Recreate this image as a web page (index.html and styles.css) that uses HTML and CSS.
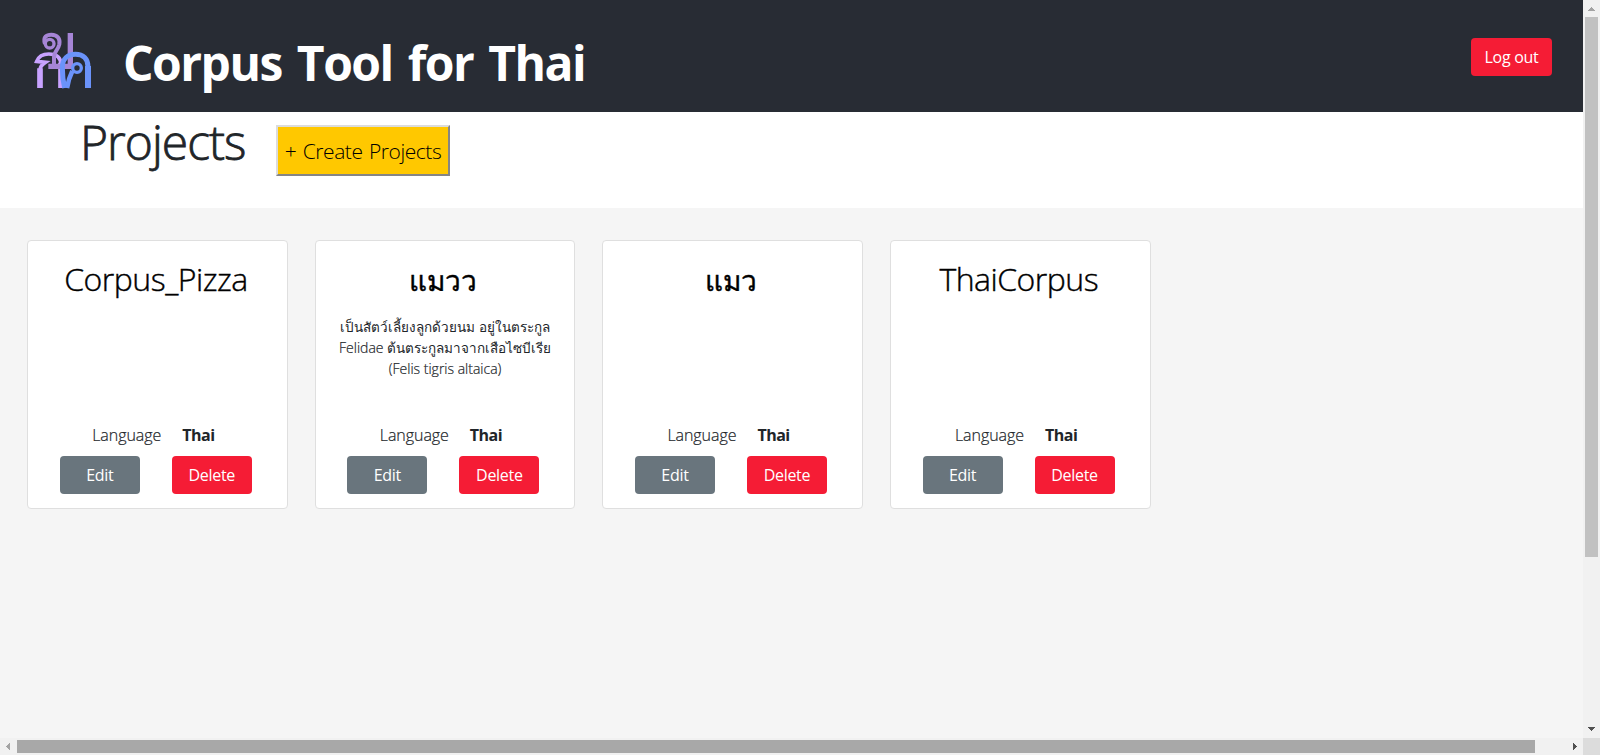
FILE: index.html
```html
<!DOCTYPE html>
<html lang="en">
<head>
<meta charset="utf-8">
<title>Corpus Tool for Thai</title>
<link rel="stylesheet" href="styles.css">
</head>
<body>
<div class="window">
  <div class="page">
    <header class="header">
      <svg class="logo" viewBox="0 0 270 240" fill="none">
        <path d="M60 204V150C60 139 65 134 76 127L50 124C57 107 70 102 86 102C110 102 123 112 123 135" stroke="#c8a2ff" stroke-width="11"/>
        <path d="M60 204V145M123 204V128" stroke="#c8a2ff" stroke-width="17"/>
        <path d="M75 72C68 50 80 44 94 44C113 44 121 57 118 73C114 91 102 95 102 110V132" stroke="#a685d6" stroke-width="12"/>
        <path d="M85 139H151V39" stroke="#a685d6" stroke-width="16"/>
        <circle cx="89" cy="71" r="13" stroke="#a685d6" stroke-width="10"/>
        <path d="M134 204C128 180 127 160 127 143C127 115 144 103 166 103C190 103 204 117 204 140V204" stroke="#6b93fa" stroke-width="15"/>
        <path d="M204 204V138" stroke="#6b93fa" stroke-width="18"/>
        <path d="M141 204C145 180 150 167 157 153" stroke="#6b93fa" stroke-width="14"/>
        <circle cx="171" cy="144" r="13" stroke="#6b93fa" stroke-width="10"/>
      </svg>
      <h1 class="title">Corpus Tool for Thai</h1>
      <button class="btn btn-red logout">Log out</button>
    </header>
    <section class="toolbar">
      <h2 class="heading">Projects</h2>
      <button class="create">+ Create Projects</button>
    </section>
    <main class="cards">
      <article class="card">
        <h3 class="name">Corpus_Pizza</h3>
        <p class="desc"></p>
        <p class="lang"><span class="lang-label">Language</span><b class="lang-value">Thai</b></p>
        <div class="actions"><button class="btn btn-gray">Edit</button><button class="btn btn-red">Delete</button></div>
      </article>
      <article class="card">
        <h3 class="name thai">แมวว</h3>
        <p class="desc"><span class="script">เป็นสัตว์เลี้ยงลูกด้วยนม อยู่ในตระกูล</span><br>Felidae <span class="script">ต้นตระกูลมาจากเสือไซบีเรีย</span><br>(Felis tigris altaica)</p>
        <p class="lang"><span class="lang-label">Language</span><b class="lang-value">Thai</b></p>
        <div class="actions"><button class="btn btn-gray">Edit</button><button class="btn btn-red">Delete</button></div>
      </article>
      <article class="card">
        <h3 class="name thai">แมว</h3>
        <p class="desc"></p>
        <p class="lang"><span class="lang-label">Language</span><b class="lang-value">Thai</b></p>
        <div class="actions"><button class="btn btn-gray">Edit</button><button class="btn btn-red">Delete</button></div>
      </article>
      <article class="card">
        <h3 class="name">ThaiCorpus</h3>
        <p class="desc"></p>
        <p class="lang"><span class="lang-label">Language</span><b class="lang-value">Thai</b></p>
        <div class="actions"><button class="btn btn-gray">Edit</button><button class="btn btn-red">Delete</button></div>
      </article>
    </main>
  </div>
  <div class="vbar">
    <svg class="arrow" viewBox="0 0 17 17" shape-rendering="crispEdges"><path d="M5 11L8.5 7L12 11Z" fill="#a3a3a3"/></svg>
    <div class="vthumb"></div>
    <svg class="arrow" viewBox="0 0 17 17" shape-rendering="crispEdges"><path d="M5 6L8.5 10L12 6Z" fill="#505050"/></svg>
  </div>
  <div class="hbar">
    <svg class="arrow" viewBox="0 0 17 17" shape-rendering="crispEdges"><path d="M10 5L6 8.5L10 12Z" fill="#a3a3a3"/></svg>
    <div class="hthumb"></div>
    <svg class="arrow" viewBox="0 0 17 17" shape-rendering="crispEdges"><path d="M7 5L11 8.5L7 12Z" fill="#505050"/></svg>
  </div>
  <div class="corner"></div>
</div>
</body>
</html>
```
FILE: styles.css
```css
* { box-sizing: border-box; }
body { margin: 0; overflow: hidden; font-family: "Open Sans", "Noto Sans", sans-serif; font-size: 16px; line-height: 24px; color: #212529; }
h1, h2, h3, p { margin: 0; font-weight: 300; }
button { font-family: inherit; }

.window { display: grid; grid-template-columns: 1583px 17px; grid-template-rows: 738px 17px; width: 1600px; height: 755px; }
.page { background: #f5f5f5; overflow: hidden; }

.header { display: flex; align-items: flex-start; height: 112px; padding: 20px 31px 0 20px; background: #282c34; }
.logo { width: 90px; height: 80px; }
.title { margin-left: 13px; padding-top: 7px; font-size: 48px; line-height: 71px; font-weight: 700; letter-spacing: -1.5px; word-spacing: 4px; color: #fff; white-space: nowrap; }
.btn { width: 80px; height: 38px; padding: 0; border: 0; border-radius: 4px; font-size: 16px; line-height: 38px; letter-spacing: -0.3px; color: #fff; }
.btn-red { background: #f51c35; }
.btn-gray { background: #69757d; }
.logout { width: 81px; margin: 18px 0 0 auto; }

.toolbar { display: flex; align-items: flex-start; height: 96px; padding-left: 80px; background: #fff; }
.heading { width: 196px; font-size: 48px; line-height: 59px; letter-spacing: -1px; -webkit-text-stroke: 0.8px #212529; }
.create { width: 174px; height: 51px; margin-top: 13px; padding: 0; border: 2px solid; border-color: #dcdcdc #858585 #858585 #dcdcdc; background: #ffc800; font-size: 21px; font-weight: 300; letter-spacing: -0.45px; word-spacing: 1.5px; color: #000; white-space: nowrap; }

.cards { display: flex; gap: 27px; padding: 32px 27.2px; }
.card { display: flex; flex-direction: column; flex: none; width: 260.6px; height: 269px; padding-top: 14px; border: 1px solid #dfdfdf; border-radius: 4px; background: #fff; text-align: center; }
.name { height: 50px; padding-right: 3px; font-size: 32px; line-height: 48px; letter-spacing: -0.5px; color: #000; white-space: nowrap; -webkit-text-stroke: 0.4px #000; }
.thai { padding-right: 4px; font-size: 28px; line-height: 50px; font-weight: 400; letter-spacing: 0.1px; }
.desc { height: 108px; padding-top: 11px; font-size: 14px; line-height: 21px; white-space: nowrap; -webkit-text-stroke: 0.2px #212529; }
.script { font-size: 13.5px; line-height: 18px; -webkit-text-stroke: 0; }
.lang { display: flex; height: 24px; margin-top: 10px; padding-left: 64px; text-align: left; }
.lang-label { width: 90px; letter-spacing: -0.05px; -webkit-text-stroke: 0.2px #212529; }
.lang-value { font-weight: 700; letter-spacing: -0.5px; }
.actions { display: flex; gap: 32px; margin-top: 9px; padding-left: 31.6px; }

.arrow { flex: none; display: block; width: 17px; height: 17px; }
.vbar { display: flex; flex-direction: column; justify-content: space-between; background: #f1f1f1; }
.vthumb { width: 13px; height: 540px; margin: 0 2px auto; background: #c1c1c1; }
.hbar { display: flex; background: #f1f1f1; }
.hthumb { width: 1518px; height: 13px; margin: 2px auto 0 0; background: #a8a8a8; }
.corner { background: #dcdcdc; }
```
